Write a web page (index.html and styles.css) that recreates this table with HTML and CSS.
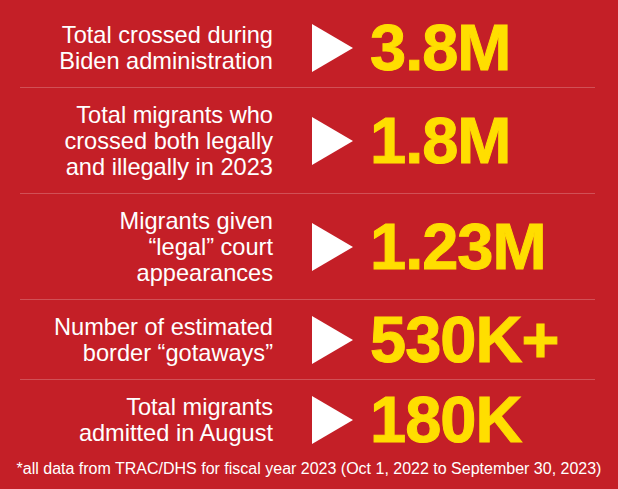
FILE: index.html
```html
<!DOCTYPE html>
<html lang="en">
<head>
<meta charset="utf-8">
<title>Border statistics FY2023</title>
<link rel="stylesheet" href="styles.css">
</head>
<body>
<main class="panel">
  <section class="stat">
    <p class="label">Total crossed during<br>Biden administration</p>
    <span class="arrow"></span>
    <p class="value">3.8M</p>
  </section>
  <section class="stat">
    <p class="label">Total migrants who<br>crossed both legally<br>and illegally in 2023</p>
    <span class="arrow"></span>
    <p class="value">1.8M</p>
  </section>
  <section class="stat">
    <p class="label">Migrants given<br>“legal” court<br>appearances</p>
    <span class="arrow"></span>
    <p class="value">1.23M</p>
  </section>
  <section class="stat">
    <p class="label">Number of estimated<br>border “gotaways”</p>
    <span class="arrow"></span>
    <p class="value">530K+</p>
  </section>
  <section class="stat stat-last">
    <p class="label">Total migrants<br>admitted in August</p>
    <span class="arrow"></span>
    <p class="value">180K</p>
  </section>
</main>
<p class="note">*all data from TRAC/DHS for fiscal year 2023 (Oct 1, 2022 to September 30, 2023)</p>
</body>
</html>
```

FILE: styles.css
```css
html, body {
  margin: 0;
  padding: 0;
}

body {
  width: 618px;
  height: 489px;
  overflow: hidden;
  background: #c41f27;
  font-family: "Liberation Sans", Arial, Helvetica, sans-serif;
  color: #ffffff;
}

.panel {
  padding: 8px 23px 0 20px;
}

.stat {
  display: flex;
  align-items: center;
  padding: 14px 0 13px;
  border-bottom: 1px solid rgba(255, 255, 255, 0.22);
}

.stat-last {
  border-bottom: none;
}

.label {
  flex: 0 0 253px;
  margin: 0;
  text-align: right;
  font-size: 23.6px;
  line-height: 26px;
  color: #ffffff;
}

.arrow {
  flex: 0 0 auto;
  width: 0;
  height: 0;
  margin-left: 39px;
  border-left: 41px solid #ffffff;
  border-top: 24.5px solid transparent;
  border-bottom: 24.5px solid transparent;
}

.value {
  margin: 0 0 0 17px;
  font-size: 65px;
  font-weight: 700;
  line-height: 52px;
  letter-spacing: -1px;
  color: #ffde00;
  -webkit-text-stroke: 1px #ffde00;
  white-space: nowrap;
}

.note {
  margin: 0;
  text-align: center;
  font-size: 16px;
  line-height: 20px;
  color: #ffffff;
}
```
